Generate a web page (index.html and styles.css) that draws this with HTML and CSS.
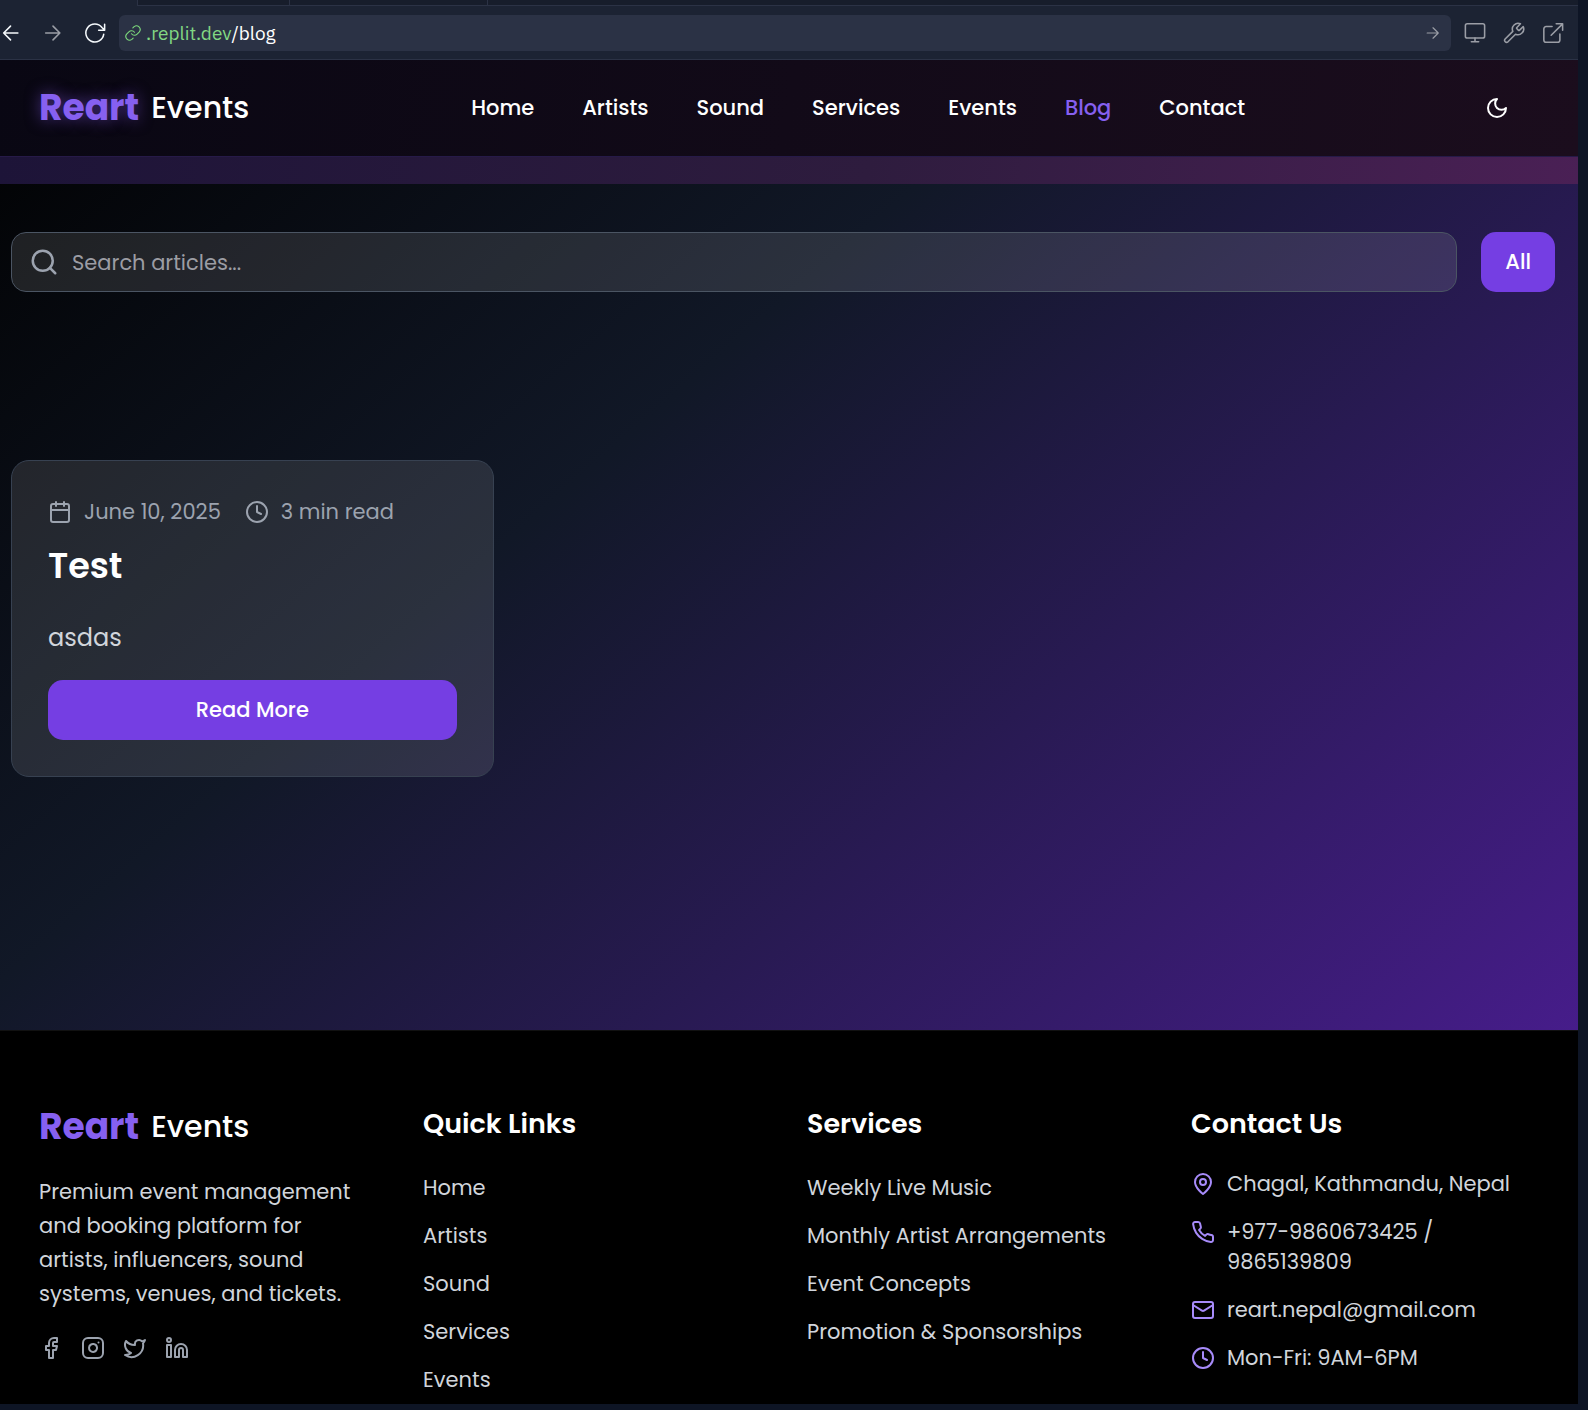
FILE: index.html
```html
<!DOCTYPE html>
<html lang="en">
<head>
<meta charset="utf-8">
<meta name="viewport" content="width=device-width, initial-scale=1">
<title>Blog - Reart Events</title>
<link rel="stylesheet" href="styles.css">
</head>
<body>
<div class="pane">
  <div class="tabstrip">
    <div class="tab tab-active"></div>
    <div class="tab tab-second"></div>
    <div class="tab tab-third"></div>
    <div class="tab tab-rest"></div>
  </div>
  <div class="toolbar">
    <div class="history">
      <button class="tool tool-bright" type="button" aria-label="Back"><svg class="icon-tool" viewBox="0 0 24 24"><path d="M19.500 12H4M11.500 4.500L4 12l7.500 7.500"/></svg></button>
      <button class="tool" type="button" aria-label="Forward"><svg class="icon-tool" viewBox="0 0 24 24"><path d="M4 12h15.500M12 4.500l7.500 7.500-7.500 7.500"/></svg></button>
      <button class="tool tool-bright" type="button" aria-label="Reload"><svg class="icon-tool" viewBox="0 0 24 24"><path d="M21.500 13.500A9.800 9.800 0 1 1 19.600 6L22.500 9M22.500 2.500V9H16"/></svg></button>
    </div>
    <div class="address">
      <svg class="icon-link" viewBox="0 0 24 24"><path d="M10 13a5 5 0 0 0 7.500.5l3-3a5 5 0 0 0-7-7l-1.700 1.700M14 11a5 5 0 0 0-7.500-.5l-3 3a5 5 0 0 0 7 7l1.700-1.700"/></svg>
      <span class="url"><span class="url-host">.replit.dev</span>/blog</span>
      <button class="tool go" type="button" aria-label="Go"><svg class="icon-go" viewBox="0 0 24 24"><path d="M2 12h19M12 3l9 9-9 9"/></svg></button>
    </div>
    <div class="actions">
      <button class="tool" type="button" aria-label="Screen size"><svg class="icon-tool" viewBox="0 0 24 24"><rect x="1.500" y="2" width="21" height="15.500" rx="2"/><path d="M8 21.500h8M12 17.500v4"/></svg></button>
      <button class="tool" type="button" aria-label="Developer tools"><svg class="icon-tool" viewBox="0 0 24 24"><path d="M15.200 6a1 1 0 0 0 0 1.400l1.500 1.500a1 1 0 0 0 1.400 0l4-3.800a6.300 6.300 0 0 1-8.400 8.200L5.400 21.600a2.200 2.200 0 0 1-3.100-3.100L10.700 10.200a6.300 6.300 0 0 1 8.300-8.200z"/></svg></button>
      <button class="tool" type="button" aria-label="Open in new tab"><svg class="icon-tool" viewBox="0 0 24 24"><path d="M19.500 13v6.500a2.500 2.500 0 0 1-2.500 2.500H4.500A2.500 2.500 0 0 1 2 19.500V7.500A2.500 2.500 0 0 1 4.500 5H11M15.500 2H22.500V9M10 14.500L22.500 2"/></svg></button>
    </div>
  </div>

  <div class="site">
    <header class="header">
      <a class="logo logo-glow" href="#"><span class="logo-mark">Reart</span><span class="logo-rest">Events</span></a>
      <nav class="nav">
        <a href="#">Home</a>
        <a href="#">Artists</a>
        <a href="#">Sound</a>
        <a href="#">Services</a>
        <a href="#">Events</a>
        <a class="nav-current" href="#">Blog</a>
        <a href="#">Contact</a>
      </nav>
      <button class="theme" type="button" aria-label="Switch theme"><svg class="icon" viewBox="0 0 24 24"><path d="M12 3a6 6 0 0 0 9 9 9 9 0 1 1-9-9Z"/></svg></button>
    </header>
    <div class="band"></div>

    <main class="main">
      <div class="filters">
        <label class="search">
          <svg class="icon-search" viewBox="0 0 24 24"><circle cx="11" cy="11" r="8"/><path d="m21 21-4.300-4.300"/></svg>
          <input class="search-input" type="text" placeholder="Search articles..." aria-label="Search articles">
        </label>
        <button class="button" type="button">All</button>
      </div>
      <div class="posts">
        <article class="card">
          <div class="meta">
            <span class="meta-item"><svg class="icon" viewBox="0 0 24 24"><path d="M8 2v4M16 2v4M3 10h18"/><rect x="3" y="4" width="18" height="18" rx="2"/></svg>June 10, 2025</span>
            <span class="meta-item"><svg class="icon" viewBox="0 0 24 24"><circle cx="12" cy="12" r="10"/><path d="M12 6v6l4 2"/></svg>3 min read</span>
          </div>
          <h2 class="card-title">Test</h2>
          <p class="card-text">asdas</p>
          <button class="button" type="button">Read More</button>
        </article>
      </div>
    </main>

    <footer class="footer">
      <section>
        <a class="logo" href="#"><span class="logo-mark">Reart</span><span class="logo-rest">Events</span></a>
        <p class="about">Premium event management and booking platform for artists, influencers, sound systems, venues, and tickets.</p>
        <div class="social">
          <a href="#" aria-label="Facebook"><svg class="icon" viewBox="0 0 24 24"><path d="M18 2h-3a5 5 0 0 0-5 5v3H7v4h3v8h4v-8h3l1-4h-4V7a1 1 0 0 1 1-1h3z"/></svg></a>
          <a href="#" aria-label="Instagram"><svg class="icon" viewBox="0 0 24 24"><rect x="2" y="2" width="20" height="20" rx="5"/><path d="M16 11.370A4 4 0 1 1 12.630 8 4 4 0 0 1 16 11.370zM17.500 6.500h.01"/></svg></a>
          <a href="#" aria-label="Twitter"><svg class="icon" viewBox="0 0 24 24"><path d="M22 4s-.7 2.100-2 3.400c1.600 10-9.400 17.300-18 11.600 2.200.1 4.400-.6 6-2C3 15.500.5 9.600 3 5c2.200 2.600 5.600 4.100 9 4-.9-4.200 4-6.600 7-3.800 1.100 0 3-1.200 3-1.200z"/></svg></a>
          <a href="#" aria-label="LinkedIn"><svg class="icon" viewBox="0 0 24 24"><path d="M16 8a6 6 0 0 1 6 6v7h-4v-7a2 2 0 0 0-4 0v7h-4v-7a6 6 0 0 1 6-6z"/><rect x="2" y="9" width="4" height="12"/><circle cx="4" cy="4" r="2"/></svg></a>
        </div>
      </section>
      <section>
        <h3 class="footer-title">Quick Links</h3>
        <ul class="links">
          <li><a href="#">Home</a></li>
          <li><a href="#">Artists</a></li>
          <li><a href="#">Sound</a></li>
          <li><a href="#">Services</a></li>
          <li><a href="#">Events</a></li>
        </ul>
      </section>
      <section>
        <h3 class="footer-title">Services</h3>
        <ul class="links">
          <li><a href="#">Weekly Live Music</a></li>
          <li><a href="#">Monthly Artist Arrangements</a></li>
          <li><a href="#">Event Concepts</a></li>
          <li><a href="#">Promotion &amp; Sponsorships</a></li>
        </ul>
      </section>
      <section>
        <h3 class="footer-title">Contact Us</h3>
        <ul class="contact">
          <li><svg class="icon" viewBox="0 0 24 24"><path d="M20 10c0 6-8 12-8 12s-8-6-8-12a8 8 0 0 1 16 0Z"/><circle cx="12" cy="10" r="3"/></svg><span>Chagal, Kathmandu, Nepal</span></li>
          <li><svg class="icon" viewBox="0 0 24 24"><path d="M22 16.920v3a2 2 0 0 1-2.180 2 19.790 19.790 0 0 1-8.630-3.070 19.500 19.500 0 0 1-6-6 19.790 19.790 0 0 1-3.070-8.670A2 2 0 0 1 4.110 2h3a2 2 0 0 1 2 1.720 12.840 12.840 0 0 0 .7 2.810 2 2 0 0 1-.45 2.110L8.090 9.910a16 16 0 0 0 6 6l1.270-1.270a2 2 0 0 1 2.110-.45 12.840 12.840 0 0 0 2.810.7A2 2 0 0 1 22 16.920z"/></svg><span>+977-9860673425 / 9865139809</span></li>
          <li><svg class="icon" viewBox="0 0 24 24"><rect x="2" y="4" width="20" height="16" rx="2"/><path d="m22 7-8.970 5.700a1.940 1.940 0 0 1-2.060 0L2 7"/></svg><span>reart.nepal@gmail.com</span></li>
          <li><svg class="icon" viewBox="0 0 24 24"><circle cx="12" cy="12" r="10"/><path d="M12 6v6l4 2"/></svg><span>Mon-Fri: 9AM-6PM</span></li>
        </ul>
      </section>
    </footer>
  </div>
</div>
</body>
</html>
```

FILE: styles.css
```css
* {
  box-sizing: border-box;
}

body {
  margin: 0;
  padding: 0 10px 6px 0;
  background: #0e1525;
  color: #fff;
  font-family: Poppins, Inter, sans-serif;
  font-size: 21px;
}

h2, h3, p, ul {
  margin: 0;
  padding: 0;
}

ul {
  list-style: none;
}

a {
  color: inherit;
  text-decoration: none;
}

button {
  margin: 0;
  padding: 0;
  border: 0;
  background: none;
  color: inherit;
  font: inherit;
}

svg {
  display: block;
  flex: none;
  fill: none;
  stroke: currentColor;
  stroke-width: 2;
  stroke-linecap: round;
  stroke-linejoin: round;
}

.icon {
  width: 24px;
  height: 24px;
}

/* Browser pane */

.tabstrip {
  display: flex;
  height: 6px;
}

.tab {
  background: #171d2b;
  border-left: 1px solid #2b3245;
  border-bottom: 1px solid #2b3245;
}

.tab-active {
  width: 137px;
  background: #1c2333;
  border: 0;
}

.tab-second {
  width: 152px;
}

.tab-third {
  width: 198px;
}

.tab-rest {
  flex: 1;
}

.toolbar {
  display: flex;
  align-items: center;
  height: 54px;
  padding-right: 13px;
  background: #1c2333;
  border-bottom: 1px solid #2b3245;
}

.history {
  display: flex;
  gap: 18px;
  width: 120px;
  margin-left: -1px;
}

.tool {
  color: #9b9ea6;
}

.tool-bright {
  color: #f5f9fc;
}

.icon-tool {
  width: 24px;
  height: 24px;
  padding: 1px;
  stroke-width: 1.7;
}

.address {
  display: flex;
  flex: 1;
  align-items: center;
  height: 36px;
  padding: 0 11px 0 5px;
  border-radius: 6px;
  background: #2b3245;
}

.icon-link {
  width: 18px;
  height: 18px;
  color: #7cd87c;
  stroke-width: 1.5;
}

.url {
  flex: 1;
  padding-left: 4px;
  font: 400 19px/24px "IBM Plex Sans", Roboto, sans-serif;
}

.url-host {
  color: #82d883;
}

.icon-go {
  width: 14px;
  height: 14px;
}

.actions {
  display: flex;
  gap: 15px;
  padding-left: 12px;
}

/* Site header */

.header {
  display: flex;
  align-items: center;
  justify-content: space-between;
  height: 97px;
  padding: 0 51px 0 39px;
  background: linear-gradient(100deg, #090713, #1b0d1d);
  border-bottom: 1px solid #261a48;
}

.logo {
  display: flex;
  align-items: center;
  gap: 12px;
  line-height: 48px;
}

.logo-mark {
  color: #8660f0;
  font-size: 36px;
  font-weight: 700;
}

.logo-glow .logo-mark {
  text-shadow: 0 0 15px rgba(139, 92, 246, 0.5);
}

.logo-rest {
  font-size: 30px;
  font-weight: 500;
}

.nav {
  display: flex;
  gap: 48px;
  padding-bottom: 2px;
  font-weight: 500;
}

.nav-current {
  color: #8660f0;
}

.theme {
  padding: 18px;
}

.band {
  height: 27px;
  background: linear-gradient(100deg, #1d1438, #2e1c3e 55%, #4a2055);
}

/* Articles */

.main {
  display: grid;
  gap: 168px;
  padding: 48px 23px 253px 11px;
  background: linear-gradient(139deg, #000 -7%, #111827 36%, #4c1d95 107%);
}

.filters {
  display: flex;
  gap: 24px;
}

.search {
  display: flex;
  flex: 1;
  align-items: center;
  gap: 13px;
  height: 60px;
  padding: 0 17px;
  border: 1px solid #4b5563;
  border-radius: 15px;
  background: rgba(255, 255, 255, 0.11);
  color: #9ca3af;
}

.icon-search {
  width: 30px;
  height: 30px;
}

.search-input {
  flex: 1;
  min-width: 0;
  padding: 0;
  border: 0;
  outline: 0;
  background: none;
  color: #fff;
  font: inherit;
}

.search-input::placeholder {
  color: #9c9da4;
}

.button {
  height: 60px;
  padding: 0 24px 2px;
  border-radius: 15px;
  background: #753ee3;
  font-weight: 500;
}

.posts {
  display: grid;
  grid-template-columns: repeat(3, 1fr);
  gap: 48px;
}

.card {
  display: flex;
  flex-direction: column;
  padding: 36px;
  border: 1px solid #374151;
  border-radius: 18px;
  background: rgba(255, 255, 255, 0.11);
}

.meta {
  display: flex;
  gap: 24px;
  color: #9ca3af;
  line-height: 30px;
}

.meta-item {
  display: flex;
  align-items: center;
  gap: 12px;
}

.card-title {
  margin-top: 15px;
  font-size: 35px;
  font-weight: 600;
  line-height: 48px;
}

.card-text {
  margin: 30px 0 24px;
  color: #d1d5db;
  font-size: 24px;
  line-height: 36px;
}

/* Footer */

.footer {
  display: grid;
  grid-template-columns: repeat(4, 1fr);
  gap: 48px;
  padding: 72px 51px 6px 39px;
  border-top: 1px solid #111;
  background: #000;
  color: #d1d5db;
}

.footer .logo-rest {
  color: #fff;
}

.about {
  margin: 24px 0 25px;
  line-height: 34px;
}

.social {
  display: flex;
  gap: 18px;
  color: #9ca3af;
}

.footer-title {
  margin-bottom: 24px;
  color: #fff;
  font-size: 27px;
  font-weight: 600;
  line-height: 42px;
}

.links {
  display: grid;
  gap: 12px;
  padding-top: 1px;
  line-height: 36px;
}

.contact {
  display: grid;
  gap: 18px;
  line-height: 30px;
}

.contact li {
  display: flex;
  gap: 12px;
}

.contact .icon {
  margin-top: 3px;
  color: #a78bfa;
}
```
